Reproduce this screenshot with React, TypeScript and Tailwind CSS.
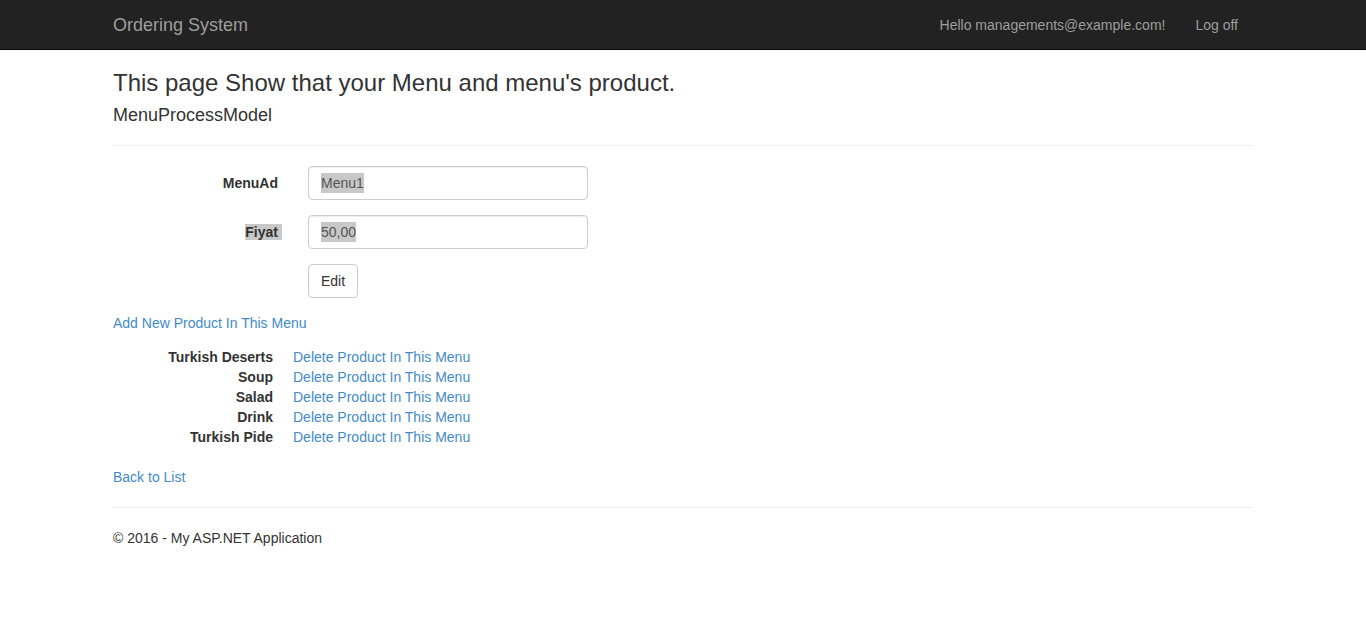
const products = ["Turkish Deserts", "Soup", "Salad", "Drink", "Turkish Pide"];

function Navbar() {
  return (
    <nav className="h-[50px] border-b border-[#080808] bg-[#222]">
      <div className="mx-auto flex h-full w-[1170px] items-center justify-between px-[15px]">
        <a href="#" className="-ml-[15px] px-[15px] text-[18px] leading-[20px] text-[#9d9d9d]">
          Ordering System
        </a>
        <ul className="flex text-[14px] leading-[20px] text-[#9d9d9d]">
          <li>
            <a href="#" className="block px-[15px]">Hello managements@example.com!</a>
          </li>
          <li>
            <a href="#" className="block px-[15px]">Log off</a>
          </li>
        </ul>
      </div>
    </nav>
  );
}

function Field({ label, value, selectedLabel }: { label: string; value: string; selectedLabel?: boolean }) {
  return (
    <div className="mb-[15px] flex">
      <div className="w-[195px] pr-[15px] pt-[7px] text-right font-bold">
        {selectedLabel ? <span className="-mr-[4px] bg-[#c8c8c8] pr-[4px]">{label}</span> : label}
      </div>
      <div className="pl-[15px]">
        <div className="flex h-[34px] w-[280px] items-center rounded-[4px] border border-[#ccc] bg-white px-[12px] text-[#555] shadow-[inset_0_1px_1px_rgba(0,0,0,0.075)]">
          <span className="bg-[#c8c8c8]">{value}</span>
        </div>
      </div>
    </div>
  );
}

export default function App() {
  return (
    <div className="min-h-[629px] bg-white font-['Liberation_Sans',Arial,sans-serif] text-[14px] leading-[20px] text-[#333]">
      <Navbar />
      <div className="mx-auto w-[1170px] px-[15px]">
        <h3 className="mb-[10px] mt-[20px] text-[24px] leading-[26.4px]">
          This page Show that your Menu and menu's product.
        </h3>
        <h4 className="mb-[9px] mt-[10px] text-[18px] leading-[19.8px]">MenuProcessModel</h4>
        <hr className="mb-[20px] mt-[19px] border-t border-[#eee]" />

        <div className="-mx-[15px]">
          <Field label="MenuAd" value="Menu1" />
          <Field label="Fiyat" value="50,00" selectedLabel />
          <div className="mb-[15px] pl-[210px]">
            <button className="h-[34px] rounded-[4px] border border-[#ccc] bg-white px-[12px] text-[#333]">Edit</button>
          </div>
        </div>

        <p className="mb-[14px]">
          <a href="#" className="text-[#428bca]">Add New Product In This Menu</a>
        </p>

        <dl className="mb-[20px]">
          {products.map((name) => (
            <div key={name} className="flex">
              <dt className="w-[160px] text-right font-bold">{name}</dt>
              <dd className="ml-[20px]">
                <a href="#" className="text-[#428bca]">Delete Product In This Menu</a>
              </dd>
            </div>
          ))}
        </dl>

        <div>
          <a href="#" className="text-[#428bca]">Back to List</a>
        </div>

        <hr className="mb-[20px] mt-[20px] border-t border-[#eee]" />
        <footer>
          <p>© 2016 - My ASP.NET Application</p>
        </footer>
      </div>
    </div>
  );
}
